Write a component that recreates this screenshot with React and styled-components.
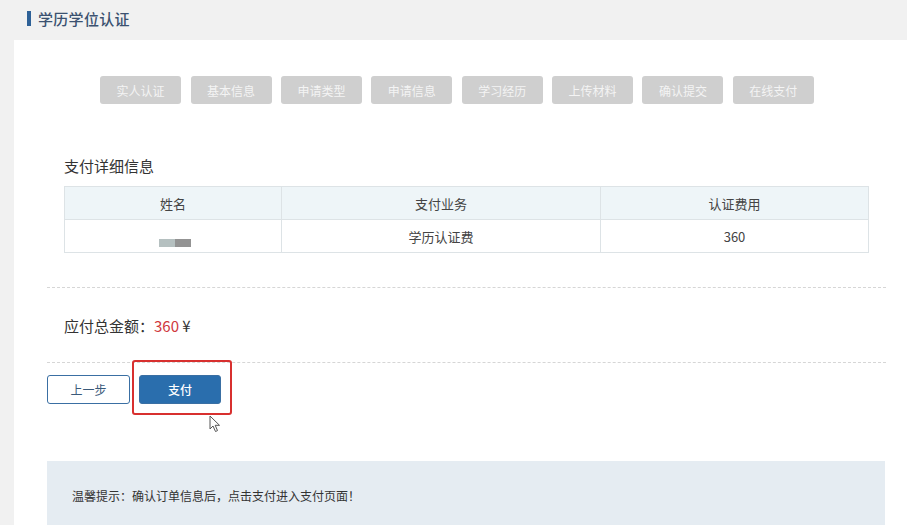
import React from 'react';
import styled, { createGlobalStyle } from 'styled-components';

const GlobalStyle = createGlobalStyle`
  html, body {
    margin: 0;
    padding: 0;
    background: #f1f1f1;
    overflow: hidden;
  }
  body {
    font-family: "Noto Sans CJK SC", "Noto Sans", sans-serif;
    color: #333;
  }
`;

const Page = styled.div`
  width: 907px;
  height: 525px;
  overflow: hidden;
`;

const Header = styled.div`
  height: 40px;
  display: flex;
  align-items: center;
  padding-left: 27px;
  box-sizing: border-box;
  padding-bottom: 4px;
`;

const Bar = styled.span`
  width: 4px;
  height: 15px;
  background: #2e6197;
  margin-right: 7px;
`;

const Title = styled.h1`
  margin: 0;
  font-size: 15px;
  font-weight: 500;
  color: #3b5170;
  letter-spacing: 0.3px;
`;

const Card = styled.div`
  margin-left: 14px;
  width: 905px;
  height: 485px;
  background: #fff;
  padding: 36px 33px 0 33px;
  box-sizing: border-box;
`;

const Steps = styled.div`
  display: flex;
  justify-content: center;
  gap: 9.4px;
  margin-left: -19px;
`;

const Step = styled.div`
  width: 81px;
  height: 28px;
  border-radius: 3px;
  background: #cfcfcf;
  color: #f4f4f4;
  font-size: 12px;
  display: flex;
  align-items: center;
  justify-content: center;
`;

const Section = styled.div`
  padding: 0 18px 0 17px;
`;

const SectionTitle = styled.div`
  margin-top: 52px;
  font-size: 15px;
  color: #333;
  line-height: 20px;
`;

const Table = styled.table`
  margin-top: 10px;
  width: 805px;
  table-layout: fixed;
  border-collapse: collapse;
  font-size: 13px;
  color: #444;
`;

const Th = styled.th`
  height: 32px;
  padding: 0;
  background: #eef5f8;
  border: 1px solid #dde3e6;
  font-weight: 400;
  width: ${p => (p.w ? `${p.w}px` : 'auto')};
`;

const Td = styled.td`
  height: 32px;
  padding: 0;
  border: 1px solid #dde3e6;
  text-align: center;
`;

const Blur = styled.span`
  display: inline-flex;
  margin: 14px 0 0 4px;
  vertical-align: middle;
`;

const BlurPart = styled.span`
  width: ${p => p.w}px;
  height: 8px;
  background: ${p => p.c};
`;

const Dashed = styled.div`
  border-top: 1px dashed #d6d6d6;
  margin-top: ${p => p.mt}px;
`;

const Total = styled.div`
  padding-left: 17px;
  margin-top: 28px;
  font-size: 15px;
  color: #333;
  line-height: 20px;
`;

const Money = styled.span`
  color: #d0393e;
`;

const Actions = styled.div`
  display: flex;
  align-items: flex-start;
  gap: 9px;
  margin-top: 12px;
`;

const Button = styled.button`
  display: block;
  width: ${p => (p.primary ? 82 : 83)}px;
  height: 29px;
  border-radius: 3px;
  font-family: inherit;
  font-size: 12px;
  cursor: pointer;
  border: 1px solid #3a6fa3;
  background: ${p => (p.primary ? '#2a6ead' : '#fff')};
  color: ${p => (p.primary ? '#fff' : '#3a5a7a')};
  font-weight: ${p => (p.primary ? 500 : 400)};
  padding: 0;
`;

const Highlight = styled.div`
  position: relative;
  display: flex;
`;

const RedBox = styled.div`
  position: absolute;
  left: -7px;
  top: -15px;
  width: 100px;
  height: 55px;
  border: 2px solid #d8302f;
  border-radius: 3px;
  box-sizing: border-box;
  pointer-events: none;
`;

const Cursor = styled.svg`
  position: absolute;
  left: 70px;
  top: 40px;
`;

const Tip = styled.div`
  margin-top: 57px;
  margin-right: 1px;
  height: 80px;
  background: #e5ecf2;
  padding: 26px 0 0 25px;
  box-sizing: border-box;
  font-size: 12px;
  color: #333;
`;

const steps = ['实人认证', '基本信息', '申请类型', '申请信息', '学习经历', '上传材料', '确认提交', '在线支付'];

export default function App() {
  return (
    <Page>
      <GlobalStyle />
      <Header>
        <Bar />
        <Title>学历学位认证</Title>
      </Header>
      <Card>
        <Steps>
          {steps.map(s => (
            <Step key={s}>{s}</Step>
          ))}
        </Steps>
        <Section>
          <SectionTitle>支付详细信息</SectionTitle>
          <Table>
            <thead>
              <tr>
                <Th w={216}>姓名</Th>
                <Th w={318}>支付业务</Th>
                <Th>认证费用</Th>
              </tr>
            </thead>
            <tbody>
              <tr>
                <Td>
                  <Blur>
                    <BlurPart w={16} c="#b5c0c0" />
                    <BlurPart w={16} c="#939393" />
                  </Blur>
                </Td>
                <Td>学历认证费</Td>
                <Td>360</Td>
              </tr>
            </tbody>
          </Table>
        </Section>
        <Dashed mt={34} />
        <Total>
          应付总金额：<Money>360</Money> ¥
        </Total>
        <Dashed mt={26} />
        <Actions>
          <Button>上一步</Button>
          <Highlight>
            <Button primary>支付</Button>
            <RedBox />
            <Cursor width="12" height="18" viewBox="0 0 12 18">
              <path d="M1 1 L1 14 L4 11 L6.5 16.5 L8.5 15.6 L6.2 10.3 L10.5 10.3 Z" fill="#fff" stroke="#555" strokeWidth="1" strokeLinejoin="round" />
            </Cursor>
          </Highlight>
        </Actions>
        <Tip>温馨提示：确认订单信息后，点击支付进入支付页面！</Tip>
      </Card>
    </Page>
  );
}
